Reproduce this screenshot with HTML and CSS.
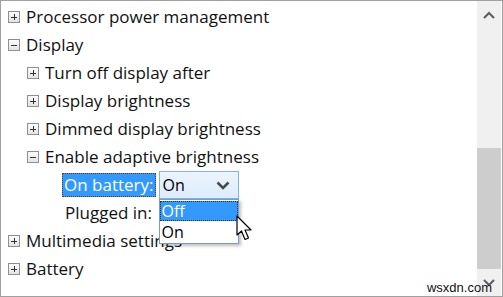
FILE: index.html
```html
<!DOCTYPE html>
<html>
<head>
<meta charset="utf-8">
<link rel="stylesheet" href="styles.css">
</head>
<body>
<div class="frame">
  <div class="tree">
    <div class="row l1"><span class="box plus"></span><span class="label">Processor power management</span></div>
    <div class="row l1"><span class="box minus"></span><span class="label">Display</span></div>
    <div class="row l2"><span class="box plus"></span><span class="label">Turn off display after</span></div>
    <div class="row l2"><span class="box plus"></span><span class="label">Display brightness</span></div>
    <div class="row l2"><span class="box plus"></span><span class="label">Dimmed display brightness</span></div>
    <div class="row l2"><span class="box minus"></span><span class="label">Enable adaptive brightness</span></div>
    <div class="row l3">
      <span class="label selected">On battery:</span>
      <div class="combo">
        <span class="combo-text">On</span>
        <svg class="chev" width="14" height="9" viewBox="0 0 14 9"><path d="M1.5 1.5 L7 7 L12.5 1.5" fill="none" stroke="#4a4a4a" stroke-width="2.6"/></svg>
        <div class="list">
          <div class="opt hi">Off</div>
          <div class="opt">On</div>
        </div>
      </div>
    </div>
    <div class="row l3 plug"><span class="label">Plugged in:</span></div>
    <div class="row l1"><span class="box plus"></span><span class="label">Multimedia settings</span></div>
    <div class="row l1"><span class="box plus"></span><span class="label">Battery</span></div>
    <svg class="cursor" width="20" height="28" viewBox="0 0 20 28"><path d="M1 1 L1 20 L5.5 16 L9 24.5 L12.5 23 L9 15 L15 15 Z" fill="#fff" stroke="#000" stroke-width="1.2" stroke-linejoin="round"/></svg>
  </div>
  <div class="scrollbar">
    <div class="sbtn"><svg width="12" height="8" viewBox="0 0 12 8"><path d="M1 7 L6 2 L11 7" fill="none" stroke="#606060" stroke-width="2.2"/></svg></div>
    <div class="track"><div class="thumb"></div></div>
    <div class="sbtn"><svg width="12" height="8" viewBox="0 0 12 8"><path d="M1 1 L6 6 L11 1" fill="none" stroke="#606060" stroke-width="2.2"/></svg></div>
  </div>
  <div class="watermark">wsxdn.com</div>
</div>
</body>
</html>
```
FILE: styles.css
```css
* { box-sizing: border-box; }
html, body { margin: 0; padding: 0; background: #fff; }
body { width: 503px; height: 297px; overflow: hidden; font-family: "Open Sans", "Noto Sans", sans-serif; }
.frame {
  position: relative;
  width: 503px; height: 297px;
  border: 1px solid #a0a0a0;
  display: flex;
  background: #fff;
}
.tree { flex: 1; position: relative; padding-top: 2px; }
.row { height: 28px; display: flex; align-items: center; font-size: 17px; color: #111; white-space: nowrap; }
.l1 { padding-left: 7px; }
.l2 { padding-left: 26px; }
.l3 { padding-left: 61px; }
.plug { padding-left: 64px; }
.box {
  width: 12px; height: 12px;
  border: 1px solid #8f8f8f;
  background: linear-gradient(#fdfdfd, #e4e4e4);
  position: relative;
  margin-right: 6px;
  flex: none;
}
.box::before { content: ""; position: absolute; left: 2px; right: 2px; top: 4.5px; height: 1px; background: #333; }
.plus::after { content: ""; position: absolute; top: 2px; bottom: 2px; left: 4.5px; width: 1px; background: #333; }
.label { line-height: 22px; }
.selected {
  background: #3399ff; color: #fff;
  outline: 1px dotted #6b3a00; outline-offset: -1px;
  padding: 0 2px;
  height: 24px; line-height: 23px;
}
.combo {
  position: relative;
  margin-left: 3px;
  width: 80px; height: 28px;
  border: 1px solid #7eb4ea;
  background: linear-gradient(#ecf4fc, #dcecfc);
  display: flex; align-items: center;
  padding-left: 3px;
}
.combo-text { font-size: 16px; color: #000; flex: 1; }
.chev { margin-right: 8px; }
.list {
  position: absolute; left: -1px; top: 27px;
  width: 80px;
  background: #fff;
  border: 1px solid #7a9cc2;
  box-shadow: 2px 2px 3px rgba(0,0,0,0.25);
  z-index: 2;
}
.opt { height: 22px; line-height: 22px; font-size: 16px; padding-left: 2px; color: #000; }
.opt.hi { background: #3399ff; color: #fff; outline: 1px dotted #333; outline-offset: -1px; height: 20px; line-height: 20px; margin: 1px 0 0; }
.cursor { position: absolute; left: 235px; top: 214px; z-index: 3; }
.scrollbar {
  width: 24px; margin-right: 1px;
  background: #f0f0f0;
  display: flex; flex-direction: column;
}
.sbtn { height: 27px; display: flex; align-items: center; justify-content: center; }
.track { flex: 1; display: flex; flex-direction: column; justify-content: flex-end; }
.thumb { height: 121px; background: #cdcdcd; }
.watermark {
  position: absolute; right: 10px; bottom: 1px;
  font-family: "Liberation Sans", sans-serif; font-size: 13px; color: #111;
}
```
